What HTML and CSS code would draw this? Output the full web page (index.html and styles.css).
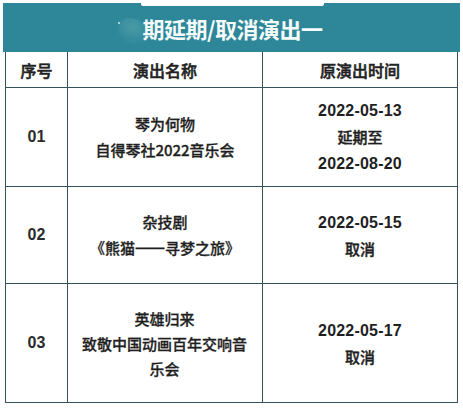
FILE: index.html
```html
<!DOCTYPE html>
<html lang="zh-CN">
<head>
<meta charset="utf-8">
<link rel="stylesheet" href="styles.css">
</head>
<body>
<div class="page">
  <div class="banner">
    <div class="banner-tab"></div>
    <div class="banner-glow"></div>
    <div class="banner-dot"></div>
    <h1 class="banner-title">期延期/取消演出一</h1>
  </div>
  <table class="schedule">
    <colgroup>
      <col class="c-no">
      <col class="c-name">
      <col class="c-time">
    </colgroup>
    <thead>
      <tr class="head-row">
        <th>序号</th>
        <th>演出名称</th>
        <th>原演出时间</th>
      </tr>
    </thead>
    <tbody>
      <tr class="row-1">
        <td class="num">01</td>
        <td class="name">琴为何物<br>自得琴社2022音乐会</td>
        <td class="time"><span class="date">2022-05-13</span><br>延期至<br><span class="date">2022-08-20</span></td>
      </tr>
      <tr class="row-2">
        <td class="num">02</td>
        <td class="name">杂技剧<br>《熊猫<span class="dash">——</span>寻梦之旅》</td>
        <td class="time"><span class="date">2022-05-15</span><br>取消</td>
      </tr>
      <tr class="row-3">
        <td class="num">03</td>
        <td class="name name-wrap">英雄归来<br>致敬中国动画百年交响音乐会</td>
        <td class="time"><span class="date">2022-05-17</span><br>取消</td>
      </tr>
    </tbody>
  </table>
</div>
</body>
</html>
```

FILE: styles.css
```css
html, body {
  margin: 0;
  padding: 0;
  background: #ffffff;
}

.page {
  width: 463px;
  height: 410px;
  padding: 3px 3px 0 3px;
  box-sizing: border-box;
  font-family: "Liberation Sans", "Noto Sans CJK SC", sans-serif;
  color: #1f1f1f;
}

.banner {
  position: relative;
  height: 49px;
  background: #2e8799;
  display: flex;
  align-items: center;
  justify-content: center;
  overflow: hidden;
}

.banner-tab {
  position: absolute;
  top: 0;
  left: 138px;
  width: 183px;
  height: 3px;
  background: #ffffff;
  border-radius: 0 0 2px 2px;
}

.banner-glow {
  position: absolute;
  left: 114px;
  top: 16px;
  width: 34px;
  height: 26px;
  border-radius: 50%;
  background: radial-gradient(ellipse at 40% 35%, rgba(150, 205, 200, 0.28), rgba(46, 135, 153, 0) 72%);
  transform: rotate(30deg);
}

.banner-dot {
  position: absolute;
  left: 115px;
  top: 19px;
  width: 2px;
  height: 2px;
  border-radius: 50%;
  background: rgba(230, 250, 245, 0.85);
}

.banner-title {
  position: relative;
  margin: 0 0 0 2px;
  font-family: "Noto Sans CJK SC", "Liberation Sans", sans-serif;
  font-size: 22px;
  font-weight: 700;
  color: #f4fbfa;
  letter-spacing: -0.5px;
  line-height: 1;
}

.schedule {
  width: 452px;
  margin: 0 0 0 2px;
  border-collapse: collapse;
  table-layout: fixed;
  background: #ffffff;
}

.c-no { width: 62px; }
.c-name { width: 195px; }
.c-time { width: 195px; }

.schedule th,
.schedule td {
  border: 1.5px solid #34525b;
  text-align: center;
  vertical-align: middle;
  padding: 0;
}

.schedule th {
  height: 35px;
  font-family: "Noto Sans CJK SC", sans-serif;
  font-size: 16px;
  font-weight: 500;
  -webkit-text-stroke: 0.5px #222222;
  color: #222222;
}

.head-row th { border-top: none; }

.schedule td {
  font-size: 15px;
  line-height: 26px;
}

.schedule .num {
  font-family: "Liberation Sans", sans-serif;
  font-size: 16px;
  font-weight: 700;
  color: #2b2b2b;
}

.schedule .name {
  font-family: "Noto Sans CJK SC", sans-serif;
  font-weight: 500;
  -webkit-text-stroke: 0.3px #1f1f1f;
  padding: 0 10px;
}

.schedule .name-wrap {
  line-height: 25px;
  padding: 0 13px 0 12px;
}

.dash {
  -webkit-text-stroke: 1.2px #1f1f1f;
}

.schedule .time {
  font-family: "Noto Sans CJK SC", sans-serif;
  font-weight: 500;
  -webkit-text-stroke: 0.4px #1f1f1f;
}

.date {
  font-family: "Liberation Sans", sans-serif;
  font-size: 16px;
  font-weight: 700;
  -webkit-text-stroke: 0;
  letter-spacing: 0.2px;
}

.row-1 td { height: 98px; }
.row-2 td { height: 96px; }
.row-3 td { height: 118px; }
```
